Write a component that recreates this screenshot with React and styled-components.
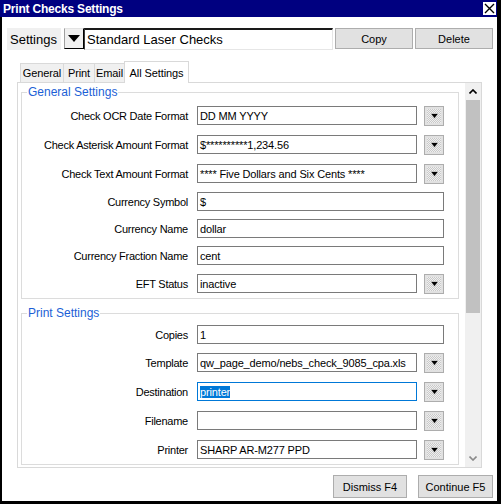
import React from 'react';
import styled, { createGlobalStyle } from 'styled-components';

const GlobalStyle = createGlobalStyle`
  html, body {
    margin: 0;
    padding: 0;
    background: #ffffff;
  }
  body {
    font-family: "Liberation Sans", Arial, sans-serif;
    color: #000000;
  }
`;

const Window = styled.div`
  width: 501px;
  height: 504px;
  box-sizing: border-box;
  display: flex;
  flex-direction: column;
  background: #ffffff;
  border-right: 4px solid #000000;
  overflow: hidden;
`;

const TitleBar = styled.div`
  height: 17px;
  flex-shrink: 0;
  background: #000080;
  color: #ffffff;
  display: flex;
  align-items: center;
  justify-content: space-between;
  padding-left: 3px;
  font-size: 12px;
  font-weight: bold;
  letter-spacing: -0.2px;
`;

const CloseBox = styled.div`
  width: 13px;
  height: 13px;
  margin-right: 1px;
  background: #ffffff;
  display: flex;
  align-items: center;
  justify-content: center;
`;

const Body = styled.div`
  flex: 1;
  display: flex;
  flex-direction: column;
  border-left: 2px solid #000000;
  border-bottom: 3px solid #000000;
`;

const SettingsRow = styled.div`
  display: flex;
  height: 22px;
  margin: 11px 0 0 5px;
`;

const SettingsLabel = styled.div`
  width: 54px;
  box-sizing: border-box;
  padding-left: 3px;
  background: #f0f0f0;
  font-size: 13px;
  display: flex;
  align-items: center;
`;

const PickButton = styled.div`
  width: 20px;
  height: 21px;
  margin-left: 3px;
  box-sizing: border-box;
  background: #f0f0f0;
  border: 1px solid;
  border-color: #e3e3e3 #000000 #000000 #a0a0a0;
  display: flex;
  align-items: center;
  justify-content: center;
`;

const NameInput = styled.div`
  width: 249px;
  height: 22px;
  box-sizing: border-box;
  padding: 0 2px;
  background: #ffffff;
  border-style: solid;
  border-width: 2px 1px 1px 1px;
  border-color: #1a1a1a #e6e6e6 #e6e6e6 #3a3a3a;
  font-size: 13px;
  display: flex;
  align-items: center;
`;

const ActionButton = styled.div`
  width: ${(p) => p.$width || 78}px;
  height: ${(p) => p.$height || 21}px;
  margin-left: ${(p) => p.$gap || 2}px;
  box-sizing: border-box;
  background: #e1e1e1;
  border: 1px solid #adadad;
  font-size: 11px;
  display: flex;
  align-items: center;
  justify-content: center;
`;

const Tabs = styled.div`
  display: flex;
  align-items: flex-end;
  height: 21px;
  margin: 11px 0 0 18px;
`;

const Tab = styled.div`
  position: relative;
  width: ${(p) => p.$w}px;
  height: ${(p) => (p.$active ? 22 : 19)}px;
  margin-bottom: ${(p) => (p.$active ? -1 : 0)}px;
  margin-right: -1px;
  box-sizing: border-box;
  background: ${(p) => (p.$active ? '#ffffff' : '#f0f0f0')};
  border: 1px solid #d9d9d9;
  border-bottom: none;
  z-index: ${(p) => (p.$active ? 2 : 1)};
  font-size: 11px;
  letter-spacing: -0.1px;
  white-space: nowrap;
  display: flex;
  align-items: center;
  justify-content: center;
`;

const Panel = styled.div`
  width: 465px;
  height: 386px;
  margin-left: 15px;
  box-sizing: border-box;
  border: 1px solid #d9d9d9;
  display: flex;
`;

const ScrollContent = styled.div`
  width: 447px;
  box-sizing: border-box;
  padding: 2px 6px 0 3px;
  overflow: hidden;
`;

const Group = styled.fieldset`
  margin: ${(p) => p.$top || 0}px 0 0 0;
  padding: 0 13px 4px 0;
  border: 1px solid #dcdcdc;
  min-width: 0;
`;

const Legend = styled.legend`
  margin-left: 5px;
  padding: 0 1px;
  font-size: 12px;
  line-height: 14px;
  color: #1c5fd6;
`;

const Rows = styled.div`
  display: flex;
  flex-direction: column;
  gap: 8px;
  padding-top: ${(p) => p.$top}px;
`;

const Row = styled.div`
  display: flex;
  align-items: center;
  height: ${(p) => (p.$drop ? 21 : 19)}px;
`;

const Label = styled.div`
  width: 166px;
  margin-right: 9px;
  text-align: right;
  font-size: 11px;
  letter-spacing: -0.25px;
  white-space: nowrap;
`;

const Field = styled.div`
  width: ${(p) => (p.$drop ? 220 : 247)}px;
  height: 19px;
  box-sizing: border-box;
  padding: 0 2px;
  border: 1px solid ${(p) => (p.$focus ? '#0078d7' : '#7a7a7a')};
  background: #ffffff;
  font-size: 11px;
  letter-spacing: -0.15px;
  white-space: nowrap;
  overflow: hidden;
  display: flex;
  align-items: center;
`;

const Selected = styled.span`
  background: #0078d7;
  color: #ffffff;
`;

const DropButton = styled.div`
  width: 20px;
  height: 20px;
  margin-left: 7px;
  box-sizing: border-box;
  border: 1px solid #adadad;
  background: #e1e1e1;
  padding: 2px;
`;

const DropFace = styled.div`
  width: 100%;
  height: 100%;
  background-color: #ececec;
  background-image: repeating-conic-gradient(#c9c9c9 0 25%, #efefef 0 50%);
  background-size: 2px 2px;
  display: flex;
  align-items: center;
  justify-content: center;
`;

const ScrollBar = styled.div`
  width: 16px;
  background: #f0f0f0;
  display: flex;
  flex-direction: column;
`;

const ScrollArrow = styled.div`
  height: 17px;
  display: flex;
  align-items: center;
  justify-content: center;
`;

const Thumb = styled.div`
  height: 213px;
  margin: 0 1px;
  background: #c1c1c1;
`;

const Track = styled.div`
  flex: 1;
`;

const Footer = styled.div`
  display: flex;
  justify-content: flex-end;
  margin-top: 7px;
  padding-right: 4px;
`;

const DownGlyph = () => (
  <svg width="9" height="6" viewBox="0 0 9 6">
    <path d="M0.5 0.5h8l-4 5z" fill="#000" stroke="#fff" strokeWidth="0.6" />
  </svg>
);

const Chevron = ({ up, color }) => (
  <svg width="8" height="5" viewBox="0 0 8 5">
    <path
      d={up ? 'M0.5 4.5L4 1l3.5 3.5' : 'M0.5 0.5L4 4l3.5-3.5'}
      fill="none"
      stroke={color}
      strokeWidth="1.6"
    />
  </svg>
);

const tabs = [
  { name: 'General', w: 44 },
  { name: 'Print', w: 32 },
  { name: 'Email', w: 31 },
  { name: 'All Settings', w: 65, active: true },
];

const general = [
  { label: 'Check OCR Date Format', value: 'DD MM YYYY', drop: true },
  { label: 'Check Asterisk Amount Format', value: '$**********1,234.56', drop: true },
  { label: 'Check Text Amount Format', value: '**** Five Dollars and Six Cents ****', drop: true },
  { label: 'Currency Symbol', value: '$' },
  { label: 'Currency Name', value: 'dollar' },
  { label: 'Currency Fraction Name', value: 'cent' },
  { label: 'EFT Status', value: 'inactive', drop: true },
];

const print = [
  { label: 'Copies', value: '1' },
  { label: 'Template', value: 'qw_page_demo/nebs_check_9085_cpa.xls', drop: true },
  { label: 'Destination', value: 'printer', drop: true, focus: true },
  { label: 'Filename', value: '', drop: true },
  { label: 'Printer', value: 'SHARP AR-M277 PPD', drop: true },
];

const SettingRow = ({ label, value, drop, focus }) => (
  <Row $drop={drop}>
    <Label>{label}</Label>
    <Field $drop={drop} $focus={focus}>
      {focus ? <Selected>{value}</Selected> : value}
    </Field>
    {drop && (
      <DropButton>
        <DropFace>
          <DownGlyph />
        </DropFace>
      </DropButton>
    )}
  </Row>
);

const App = () => (
  <>
    <GlobalStyle />
    <Window>
      <TitleBar>
        Print Checks Settings
        <CloseBox>
          <svg width="11" height="11" viewBox="0 0 11 11">
            <path d="M1 1l9 9M10 1l-9 9" stroke="#000" strokeWidth="1.4" />
          </svg>
        </CloseBox>
      </TitleBar>
      <Body>
        <SettingsRow>
          <SettingsLabel>Settings</SettingsLabel>
          <PickButton>
            <svg width="12" height="7" viewBox="0 0 12 7">
              <path d="M0 0h12L6 7z" fill="#000" />
            </svg>
          </PickButton>
          <NameInput>Standard Laser Checks</NameInput>
          <ActionButton>Copy</ActionButton>
          <ActionButton>Delete</ActionButton>
        </SettingsRow>

        <Tabs>
          {tabs.map((t) => (
            <Tab key={t.name} $w={t.w} $active={t.active}>
              {t.name}
            </Tab>
          ))}
        </Tabs>

        <Panel>
          <ScrollContent>
            <Group>
              <Legend>General Settings</Legend>
              <Rows $top={6}>
                {general.map((r) => (
                  <SettingRow key={r.label} {...r} />
                ))}
              </Rows>
            </Group>
            <Group $top={7}>
              <Legend>Print Settings</Legend>
              <Rows $top={5}>
                {print.map((r) => (
                  <SettingRow key={r.label} {...r} />
                ))}
              </Rows>
            </Group>
          </ScrollContent>
          <ScrollBar>
            <ScrollArrow>
              <Chevron up color="#000" />
            </ScrollArrow>
            <Thumb />
            <Track />
            <ScrollArrow>
              <Chevron color="#8a8a8a" />
            </ScrollArrow>
          </ScrollBar>
        </Panel>

        <Footer>
          <ActionButton $width={74} $height={23} $gap={0}>
            Dismiss F4
          </ActionButton>
          <ActionButton $width={75} $height={23} $gap={11}>
            Continue F5
          </ActionButton>
        </Footer>
      </Body>
    </Window>
  </>
);

export default App;
